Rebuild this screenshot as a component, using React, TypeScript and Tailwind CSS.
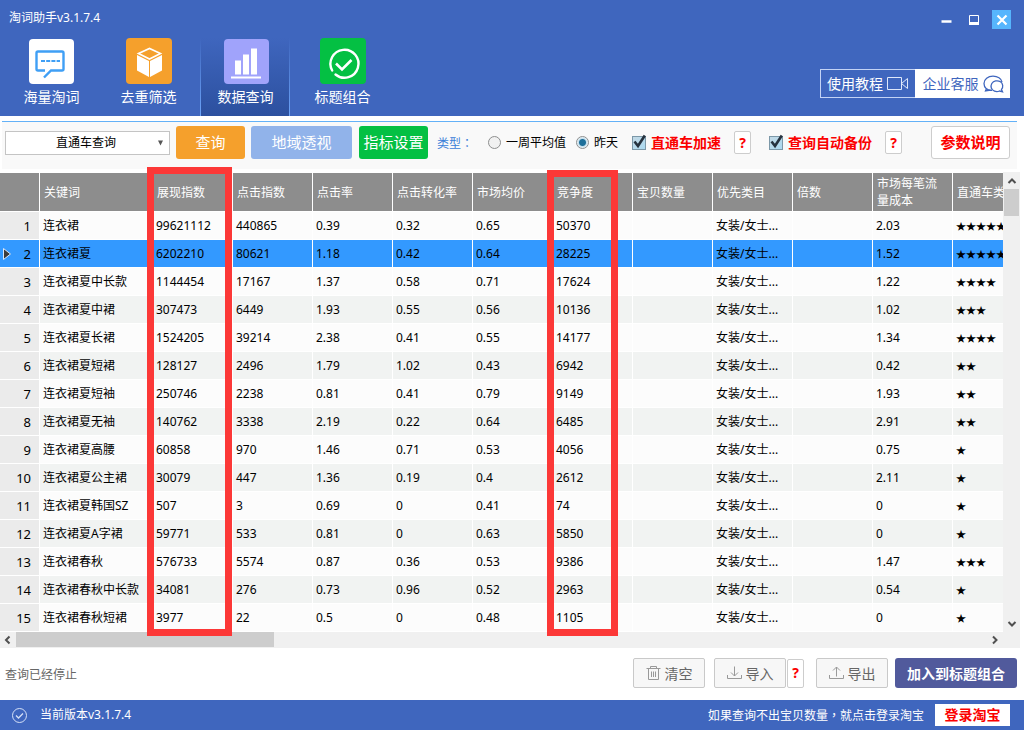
import { useState } from "react";
import type { ReactNode } from "react";

interface Keyword {
  name: string;
  impressions: string;
  clicks: string;
  ctr: string;
  cvr: string;
  price: string;
  competition: string;
  cost: string;
  stars: number;
}

const keywords: Keyword[] = [
  { name: "连衣裙", impressions: "99621112", clicks: "440865", ctr: "0.39", cvr: "0.32", price: "0.65", competition: "50370", cost: "2.03", stars: 5 },
  { name: "连衣裙夏", impressions: "6202210", clicks: "80621", ctr: "1.18", cvr: "0.42", price: "0.64", competition: "28225", cost: "1.52", stars: 5 },
  { name: "连衣裙夏中长款", impressions: "1144454", clicks: "17167", ctr: "1.37", cvr: "0.58", price: "0.71", competition: "17624", cost: "1.22", stars: 4 },
  { name: "连衣裙夏中裙", impressions: "307473", clicks: "6449", ctr: "1.93", cvr: "0.55", price: "0.56", competition: "10136", cost: "1.02", stars: 3 },
  { name: "连衣裙夏长裙", impressions: "1524205", clicks: "39214", ctr: "2.38", cvr: "0.41", price: "0.55", competition: "14177", cost: "1.34", stars: 4 },
  { name: "连衣裙夏短裙", impressions: "128127", clicks: "2496", ctr: "1.79", cvr: "1.02", price: "0.43", competition: "6942", cost: "0.42", stars: 2 },
  { name: "连衣裙夏短袖", impressions: "250746", clicks: "2238", ctr: "0.81", cvr: "0.41", price: "0.79", competition: "9149", cost: "1.93", stars: 2 },
  { name: "连衣裙夏无袖", impressions: "140762", clicks: "3338", ctr: "2.19", cvr: "0.22", price: "0.64", competition: "6485", cost: "2.91", stars: 2 },
  { name: "连衣裙夏高腰", impressions: "60858", clicks: "970", ctr: "1.46", cvr: "0.71", price: "0.53", competition: "4056", cost: "0.75", stars: 1 },
  { name: "连衣裙夏公主裙", impressions: "30079", clicks: "447", ctr: "1.36", cvr: "0.19", price: "0.4", competition: "2612", cost: "2.11", stars: 1 },
  { name: "连衣裙夏韩国SZ", impressions: "507", clicks: "3", ctr: "0.69", cvr: "0", price: "0.41", competition: "74", cost: "0", stars: 1 },
  { name: "连衣裙夏A字裙", impressions: "59771", clicks: "533", ctr: "0.81", cvr: "0", price: "0.63", competition: "5850", cost: "0", stars: 1 },
  { name: "连衣裙春秋", impressions: "576733", clicks: "5574", ctr: "0.87", cvr: "0.36", price: "0.53", competition: "9386", cost: "1.47", stars: 3 },
  { name: "连衣裙春秋中长款", impressions: "34081", clicks: "276", ctr: "0.73", cvr: "0.96", price: "0.52", competition: "2963", cost: "0.54", stars: 1 },
  { name: "连衣裙春秋短裙", impressions: "3977", clicks: "22", ctr: "0.5", cvr: "0", price: "0.48", competition: "1105", cost: "0", stars: 1 },
];

const columns = ["关键词", "展现指数", "点击指数", "点击率", "点击转化率", "市场均价", "竞争度", "宝贝数量", "优先类目", "倍数", "市场每笔流量成本", "直通车类目"];

const tabs: { label: string; icon: ReactNode }[] = [
  {
    label: "海量淘词",
    icon: (
      <>
        <rect x="0" y="1" width="45" height="45" rx="4" fill="#fff" />
        <path d="M9 13.500h24a1.500 1.500 0 0 1 1.500 1.500v16a1.500 1.500 0 0 1-1.500 1.500H22l-7 7M16 32.500H9A1.500 1.500 0 0 1 7.500 31V15A1.500 1.500 0 0 1 9 13.500" fill="none" stroke="#3f9ff5" strokeWidth="2.400" />
        <path d="M12 23h19" stroke="#3f9ff5" strokeWidth="2.200" strokeDasharray="4 1.200" />
      </>
    ),
  },
  {
    label: "去重筛选",
    icon: (
      <>
        <rect width="46" height="46" rx="4" fill="#f5a02c" />
        <path d="M11 17l12 6v16l-12-6.500zM36 17l-12 6v16l12-6.500z" fill="#fff" />
        <path d="M12.500 15.500L23.500 10.500l11 5-11 5.500z" fill="none" stroke="#fff" strokeWidth="1.600" />
      </>
    ),
  },
  {
    label: "数据查询",
    icon: (
      <>
        <rect x="1" y="1" width="45" height="45" rx="4" fill="#a0a3fb" />
        <path d="M12 22.500h6v14h-6zM20 16.500h6v20h-6zM28 10.500h6v26h-6zM8 38.500h30v2H8z" fill="#fff" />
      </>
    ),
  },
  {
    label: "标题组合",
    icon: (
      <>
        <rect width="46" height="46" rx="4" fill="#04c043" />
        <path d="M12.200 32.500A14 14 0 1 1 15.500 36.500" fill="none" stroke="#fff" strokeWidth="2.400" strokeLinecap="round" />
        <path d="M16 25.500l6 6 9.500-9.500" fill="none" stroke="#fff" strokeWidth="2.600" />
      </>
    ),
  },
];

function Chevron({ d }: { d: string }) {
  return (
    <svg width="10" height="10" viewBox="0 0 10 10" fill="none" stroke="#505050" strokeWidth="2" aria-hidden="true">
      <path d={d} />
    </svg>
  );
}

function WindowHeader() {
  const [active, setActive] = useState("数据查询");

  return (
    <header className="bg-[#3f66be] text-white">
      <div className="flex h-[38px] items-start justify-between pt-[10px] pr-[13px] pl-[9px]">
        <h1 className="text-[12px] leading-4">淘词助手v3.1.7.4</h1>
        <div className="flex h-[19px] items-center">
          <button aria-label="最小化" className="mr-[17px]">
            <svg width="11" height="19" viewBox="0 0 11 19"><path d="M0.500 11.500h10" stroke="#fff" strokeWidth="2.500" /></svg>
          </button>
          <button aria-label="最大化" className="mr-[13px]">
            <svg width="10" height="19" viewBox="0 0 10 19">
              <path d="M0.500 5.500h9v9h-9z" fill="none" stroke="#fff" />
              <path d="M0 12h10v3H0z" fill="#fff" />
            </svg>
          </button>
          <button aria-label="关闭" className="bg-[#56b5fd]">
            <svg width="19" height="19" viewBox="0 0 19 19"><path d="M5.500 5.500l9 9m0-9l-9 9" stroke="#fff" strokeWidth="2.200" /></svg>
          </button>
        </div>
      </div>
      <div className="flex justify-between pr-[14px] pl-[6px]">
        <nav className="flex gap-[7px]">
          {tabs.map((tab) => (
            <button
              key={tab.label}
              onClick={() => setActive(tab.label)}
              className={`flex h-[78px] w-[90px] items-stretch ${tab.label === active ? "bg-linear-to-b from-[#3f66be] to-[#2c509f]" : ""}`}
            >
              <span className={`w-px ${tab.label === active ? "bg-linear-to-b from-[#3f66be] to-[#6da4f8]" : ""}`} />
              <span className="flex flex-1 flex-col items-center pl-px">
                <svg width="46" height="46" viewBox="0 0 46 46" aria-hidden="true">{tab.icon}</svg>
                <span className="mt-[3px] text-[14px] leading-5">{tab.label}</span>
              </span>
              <span className={`w-px ${tab.label === active ? "bg-linear-to-b from-[#3f66be] to-[#6da4f8]" : ""}`} />
            </button>
          ))}
        </nav>
        <div className="mt-[31px] flex h-[29px] text-[14px]">
          <button className="flex w-[95px] items-center justify-center gap-1 border border-r-0 border-[#c3d3f5]">
            使用教程
            <svg width="22" height="14" viewBox="0 0 22 14" fill="none" stroke="#dfe8fb" aria-hidden="true">
              <path d="M0.500 0.500h14v12h-14zM14.500 6.500l6-5v10z" />
            </svg>
          </button>
          <button className="flex w-[95px] items-center justify-center gap-1 bg-white pl-px text-[#3f66be]">
            企业客服
            <svg width="21" height="18" viewBox="0 0 21 18" fill="none" stroke="#3f66be" strokeWidth="1.300" aria-hidden="true">
              <path d="M9 15.300C4 15.500 1 12.500 1 8.500 1 4 5 1.200 10 1.200c4.500 0 8.500 2.300 9 6M3.500 13.500L2.500 16l5-.800" />
              <path d="M18.500 14.500c2-2.500 1.500-6-1-7.700-3-1.800-7-1-8.700 1.700-1.700 3-.5 6.500 2.700 7.700 1.700.600 3.500.500 5-.200l3 .700z" />
            </svg>
          </button>
        </div>
      </div>
    </header>
  );
}

function Radio({ label, defaultChecked }: { label: string; defaultChecked?: boolean }) {
  return (
    <label className="flex shrink-0 items-center gap-[5px] text-[12px] text-black">
      <input
        type="radio"
        name="period"
        defaultChecked={defaultChecked}
        className="size-[13px] appearance-none rounded-full border border-[#8e8f8f] bg-[#f1f1f1] checked:bg-[radial-gradient(circle,#1d6f9a_0_3px,#c5dfec_4px,#f4f9fb_6px)]"
      />
      {label}
    </label>
  );
}

function RedCheckbox({ label }: { label: string }) {
  return (
    <label className="flex shrink-0 items-center gap-[5px] text-[14px] font-bold text-[#fb0000]">
      <span className="grid size-[14px]">
        <input
          type="checkbox"
          defaultChecked
          className="peer col-start-1 row-start-1 size-[14px] appearance-none border border-[#7c98a8] bg-linear-to-br from-[#c3d9e5] to-[#aad9f0]"
        />
        <svg className="pointer-events-none invisible col-start-1 row-start-1 overflow-visible peer-checked:visible" width="14" height="14" viewBox="0 0 14 14" fill="none" stroke="#26323e" strokeWidth="2.600" aria-hidden="true">
          <path d="M2.500 5.500l3.500 4.500L12.800-.500" />
        </svg>
      </span>
      {label}
    </label>
  );
}

function HelpButton({ className = "" }: { className?: string }) {
  return (
    <button aria-label="帮助" className={`w-[17px] shrink-0 rounded-xs border border-[#cdcdcd] bg-white text-[14px] leading-none font-bold text-[#fb0000] ${className}`}>
      ?
    </button>
  );
}

function FilterBar() {
  return (
    <div className="mt-[5px] mr-[7px] ml-0.5 flex h-12 items-center border-t border-[#63b1f7] bg-[#f9f9f9] pr-[7px] pb-[6px] pl-[3px]">
      <div className="relative mr-[6px] shrink-0">
        <select aria-label="查询方式" className="block h-6 w-[165px] appearance-none border border-[#c4c4c4] bg-white pr-[3px] text-center text-[12px] text-black [text-align-last:center]">
          <option>直通车查询</option>
        </select>
        <svg className="pointer-events-none absolute top-[9px] right-[7px]" width="5" height="6" viewBox="0 0 5 6" aria-hidden="true">
          <path d="M0 0.500h5L2.500 5.500z" fill="#555" />
        </svg>
      </div>
      <button className="mr-[6px] h-[33px] w-[69px] shrink-0 rounded-[3px] bg-[#f5a02c] text-[15px] text-white">查询</button>
      <button className="mr-[7px] h-[33px] w-[101px] shrink-0 rounded-[3px] bg-[#91b3ea] text-[15px] text-white">地域透视</button>
      <button className="mr-[9px] h-[33px] w-[69px] shrink-0 rounded-[3px] bg-[#04c043] text-[15px] text-white">指标设置</button>
      <span className="mr-[15px] shrink-0 font-['Noto_Sans_CJK_TC',sans-serif] text-[12px] text-[#3a80d8]">类型：</span>
      <div className="mr-[14px] flex shrink-0 gap-[10px]">
        <Radio label="一周平均值" />
        <Radio label="昨天" defaultChecked />
      </div>
      <RedCheckbox label="直通车加速" />
      <HelpButton className="mr-[18px] ml-[13px] h-[23px]" />
      <RedCheckbox label="查询自动备份" />
      <HelpButton className="ml-[13px] h-[23px]" />
      <button className="ml-auto h-[33px] w-[79px] shrink-0 rounded-[3px] border border-[#cdcdcd] bg-white text-[15px] font-bold text-[#fb0000]">
        参数说明
      </button>
    </div>
  );
}

function KeywordTable() {
  const [selected, setSelected] = useState(1);

  return (
    <table className="w-[1033px] table-fixed border-separate border-spacing-0 text-left text-[12px] text-black">
      <colgroup>
        <col className="w-[40px]" />
        <col className="w-[113px]" />
        {columns.slice(1).map((column) => (
          <col key={column} className="w-[80px]" />
        ))}
      </colgroup>
      <thead>
        <tr className="h-[39px] bg-[#8d8d8d] text-white">
          <th className="border-r border-b border-white" />
          {columns.map((column) => (
            <th key={column} className="border-r border-b border-white p-0 pr-[10px] pl-1 leading-[17px] font-normal">
              {column}
            </th>
          ))}
        </tr>
      </thead>
      <tbody>
        {keywords.map((row, i) => {
          const isSelected = i === selected;
          const cells = [row.name, row.impressions, row.clicks, row.ctr, row.cvr, row.price, row.competition, "", "女装/女士...", "", row.cost];
          return (
            <tr
              key={row.name}
              onClick={() => setSelected(i)}
              className={`h-7 ${isSelected ? "bg-[#3399ff]" : "bg-[#fcfcfc] even:bg-[#f1f3f2]"}`}
            >
              <th className={`border-r border-b border-white p-0 pr-2 pl-[3px] text-[13px] leading-5 font-normal ${isSelected ? "" : "bg-[#ebebeb]"}`}>
                <span className="flex items-center justify-between">
                  <svg width="8" height="12" viewBox="0 0 8 12" aria-hidden="true">
                    {isSelected && <path d="M0.500 0.500v11L7.500 6z" fill="#3c3c3c" stroke="#dbe9fa" />}
                  </svg>
                  {i + 1}
                </span>
              </th>
              {cells.map((cell, c) => (
                <td key={c} className="border-r border-b border-white p-0 pl-[3px] leading-5 whitespace-nowrap">
                  {cell}
                </td>
              ))}
              <td className="border-b border-white p-0 pl-[3px] font-['Noto_Sans_CJK_SC',sans-serif] text-[10px] leading-5 whitespace-nowrap">
                {"★".repeat(row.stars)}
              </td>
            </tr>
          );
        })}
      </tbody>
    </table>
  );
}

function ResultPanel() {
  return (
    <section className="relative mt-1 mr-1">
      <div className="flex">
        <div className="min-w-0 flex-1 overflow-hidden">
          <KeywordTable />
        </div>
        <div className="-mt-px flex w-[17px] flex-col items-center bg-[#f0f0f0]">
          <div className="flex h-[17px] items-center">
            <Chevron d="M1.500 7L5 3.500 8.500 7" />
          </div>
          <div className="h-[27px] w-[15px] bg-[#cdcdcd]" />
          <div className="mt-auto flex h-[17px] items-center">
            <Chevron d="M1.500 3L5 6.500 8.500 3" />
          </div>
        </div>
      </div>
      <div className="flex h-4 items-center bg-[#f0f0f0] pr-5">
        <div className="flex w-4 justify-center">
          <Chevron d="M6.500 1.500L3 5l3.500 3.500" />
        </div>
        <div className="mb-px h-[15px] w-[258px] bg-[#cdcdcd]" />
        <div className="ml-auto">
          <Chevron d="M3 1.500L6.500 5 3 8.500" />
        </div>
      </div>
      {/* highlighted columns */}
      <div className="pointer-events-none absolute -top-[6px] left-[147px] h-[469px] w-[85px] border-[7px] border-[#fc3837]" />
      <div className="pointer-events-none absolute -top-[3px] left-[547px] h-[466px] w-[71px] border-[7px] border-[#fc3837]" />
    </section>
  );
}

function GrayButton({ label, children }: { label: string; children: ReactNode }) {
  return (
    <button className="flex h-[30px] w-[72px] items-center justify-center gap-[3px] rounded-xs border border-[#c9c9c9] bg-[#f7f7f7] pr-px text-[14px] text-[#666]">
      <svg width="17" height="16" viewBox="0 0 17 16" fill="none" stroke="#999" aria-hidden="true">{children}</svg>
      {label}
    </button>
  );
}

function ActionBar() {
  return (
    <div className="flex h-[52px] items-center pr-[7px] pb-0.5 pl-[5px]">
      <p className="mr-auto pt-1 text-[12px] text-[#666]">查询已经停止</p>
      <GrayButton label="清空">
        <path d="M1.500 3.500h14M5.500 3.500v-2h6v2M3.500 3.500v11h10v-11M6.500 6.500v5.500M8.500 6.500v5.500M10.500 6.500v5.500" />
      </GrayButton>
      <div className="mr-3 ml-[9px] flex items-center gap-px">
        <GrayButton label="导入">
          <path d="M1.500 10v3.500h14V10M8.500 1.500v9.500M5 7.500L8.500 11 12 7.500" />
        </GrayButton>
        <HelpButton className="h-[29px]" />
      </div>
      <GrayButton label="导出">
        <path d="M1.500 10v3.500h14V10M8.500 11.500V2M5 5.500L8.500 2 12 5.500" />
      </GrayButton>
      <button className="ml-[7px] h-[30px] w-[122px] rounded-[3px] bg-[#515a9c] text-[14px] font-bold text-white">
        加入到标题组合
      </button>
    </div>
  );
}

export default function App() {
  return (
    <div className="flex min-h-screen flex-col bg-white font-['Noto_Sans','Noto_Sans_CJK_SC',sans-serif]">
      <WindowHeader />
      <main>
        <FilterBar />
        <ResultPanel />
        <ActionBar />
      </main>
      <footer className="mt-auto flex h-[30px] items-center bg-[#3f66be] pr-[14px] pl-3 text-[12px] text-white">
        <svg className="mr-[13px]" width="15" height="15" viewBox="0 0 15 15" fill="none" stroke="#d5e0f7" aria-hidden="true">
          <circle cx="7.500" cy="7.500" r="7" />
          <path d="M4 7.500l2.500 2.500 4.500-4.500" strokeWidth="1.300" />
        </svg>
        <span>当前版本v3.1.7.4</span>
        <span className="mr-[11px] ml-auto font-['Noto_Sans_CJK_TC',sans-serif]">如果查询不出宝贝数量，就点击登录淘宝</span>
        <button className="h-[22px] w-[75px] bg-white text-[14px] leading-none font-bold text-[#fb0000]">登录淘宝</button>
      </footer>
    </div>
  );
}
